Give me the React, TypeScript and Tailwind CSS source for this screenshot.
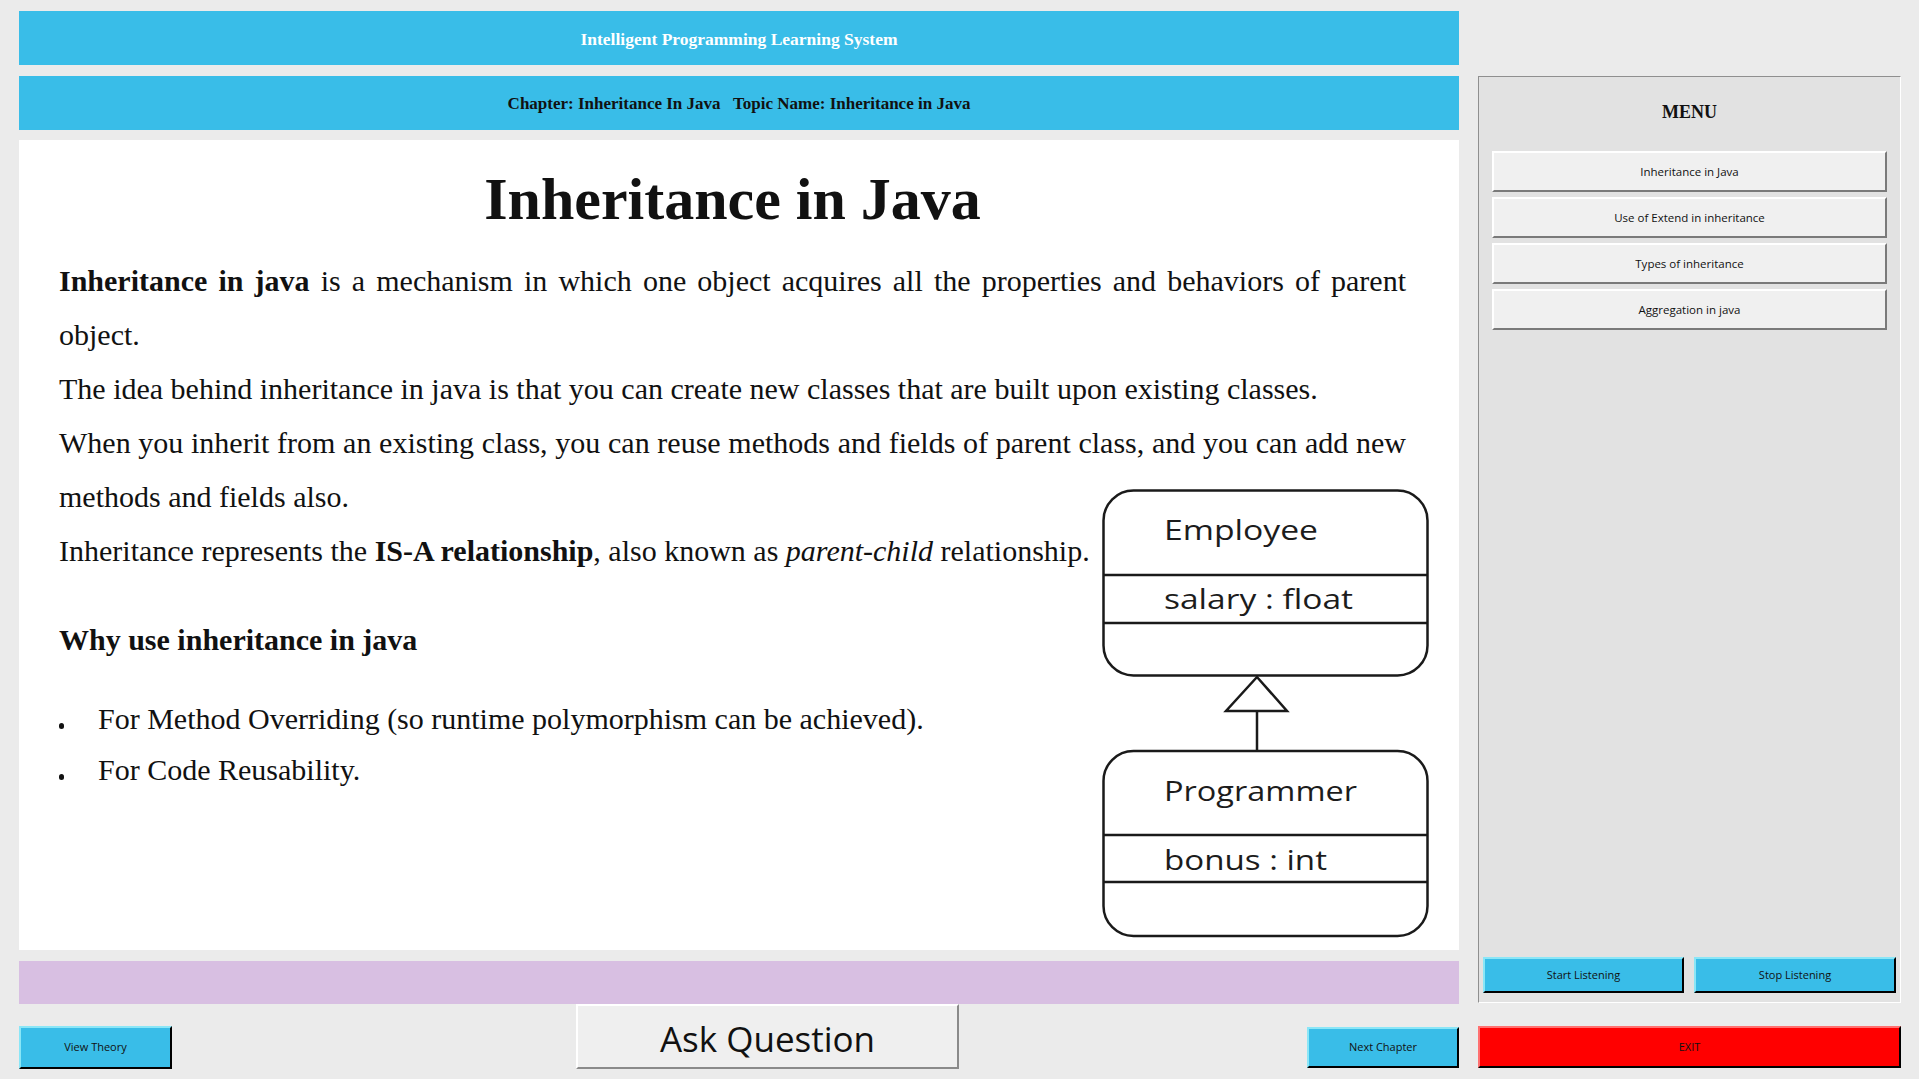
import React from "react";

const serif = { fontFamily: '"Liberation Serif", "Times New Roman", serif' };
const ui = { fontFamily: '"Open Sans", "Noto Sans", sans-serif' };

function Uml() {
  const txt = { fontFamily: '"Open Sans", Lato, sans-serif', fontSize: 27, fill: "#1c1c1c" } as React.CSSProperties;
  return (
    <svg width="328" height="450" viewBox="0 0 328 450" className="block">
      <g fill="none" stroke="#1a1a1a" strokeWidth="2.5">
        <rect x="1.5" y="1.5" width="324" height="185" rx="30" />
        <line x1="1.5" y1="86" x2="325.5" y2="86" />
        <line x1="1.5" y1="134" x2="325.5" y2="134" />
        <polygon points="155,188 124,222 185,222" />
        <line x1="155" y1="222" x2="155" y2="262" />
        <rect x="1.5" y="262" width="324" height="185" rx="30" />
        <line x1="1.5" y1="346" x2="325.5" y2="346" />
        <line x1="1.5" y1="393" x2="325.5" y2="393" />
      </g>
      <text x="62" y="51" style={txt} textLength="154" lengthAdjust="spacingAndGlyphs">Employee</text>
      <text x="62" y="120" style={txt} textLength="189" lengthAdjust="spacingAndGlyphs">salary : float</text>
      <text x="62" y="312" style={txt} textLength="193" lengthAdjust="spacingAndGlyphs">Programmer</text>
      <text x="62" y="381" style={txt} textLength="163" lengthAdjust="spacingAndGlyphs">bonus : int</text>
    </svg>
  );
}

function MenuBtn({ label }: { label: string }) {
  return (
    <button
      className="h-[41px] w-full bg-[#f0f0f0] border-t-2 border-l-2 border-t-white border-l-white border-b-2 border-r-2 border-b-[#7a7a7a] border-r-[#7a7a7a] text-[11.5px] text-[#111]"
      style={ui}
    >
      {label}
    </button>
  );
}

function Bullet({ children }: { children: React.ReactNode }) {
  return (
    <li className="flex">
      <span className="w-[39px] shrink-0">
        <span className="block mt-[30px] w-[5px] h-[6px] rounded-full bg-[#111]" />
      </span>
      <span>{children}</span>
    </li>
  );
}

export default function App() {
  return (
    <div className="w-[1919px] h-[1079px] bg-[#ebebeb] flex overflow-hidden">
      {/* Left column */}
      <div className="w-[1440px] ml-[19px] pt-[11px] flex flex-col">
        <div className="h-[54px] bg-[#39bde8] flex items-center justify-center pt-[2px]">
          <span className="text-white font-bold text-[17.5px]" style={serif}>
            Intelligent Programming Learning System
          </span>
        </div>
        <div className="h-[54px] mt-[11px] bg-[#39bde8] flex items-center justify-center pt-[2px]">
          <span className="text-[#111] font-bold text-[17px] whitespace-pre" style={serif}>
            {"Chapter: Inheritance In Java   Topic Name: Inheritance in Java"}
          </span>
        </div>
        <div className="relative h-[810px] mt-[10px] bg-white pl-[40px] pr-[53px] pt-[24px] text-[#111]" style={serif}>
          <h1 className="text-[60px] leading-[70px] font-bold text-center">Inheritance in Java</h1>
          <div className="text-[30px] leading-[54px] mt-[20px] text-justify">
            <p>
              <b>Inheritance in java</b> is a mechanism in which one object acquires all the properties and behaviors of parent object.
            </p>
            <p>The idea behind inheritance in java is that you can create new classes that are built upon existing classes.</p>
            <p>
              When you inherit from an existing class, you can reuse methods and fields of parent class, and you can add new methods and fields also.
            </p>
            <p>
              Inheritance represents the <b>IS-A relationship</b>, also known as <i>parent-child</i> relationship.
            </p>
            <p className="font-bold mt-[35px]">Why use inheritance in java</p>
            <ul className="mt-[26px] leading-[51px]">
              <Bullet>For Method Overriding (so runtime polymorphism can be achieved).</Bullet>
              <Bullet>For Code Reusability.</Bullet>
            </ul>
          </div>
          <div className="absolute left-[1083px] top-[349px]">
            <Uml />
          </div>
        </div>
        <div className="h-[43px] mt-[11px] bg-[#d8bfe2]" />
        <div className="h-[65px] flex items-end">
          <button
            className="w-[153px] h-[43px] bg-[#39bde8] border-t-2 border-l-2 border-t-[#8ae6f7] border-l-[#8ae6f7] border-b-2 border-r-2 border-b-black border-r-black text-[11px] text-[#111]"
            style={ui}
          >
            View Theory
          </button>
          <button
            className="ml-[404px] w-[383px] h-[65px] bg-[#efefef] border-t-2 border-l-2 border-t-white border-l-white border-b-2 border-r-2 border-b-[#8a8a8a] border-r-[#8a8a8a] text-[35px] text-[#111] leading-none pt-[4px]"
            style={ui}
          >
            Ask Question
          </button>
          <button
            className="ml-auto mb-[1px] w-[152px] h-[41px] bg-[#39bde8] border-t-2 border-l-2 border-t-[#8ae6f7] border-l-[#8ae6f7] border-b-2 border-r-2 border-b-black border-r-black text-[11px] text-[#111]"
            style={ui}
          >
            Next Chapter
          </button>
        </div>
      </div>

      {/* Right column */}
      <div className="w-[423px] ml-[19px] pt-[76px] flex flex-col">
        <div className="h-[927px] bg-[#e2e2e2] border-t border-l border-t-[#8f8f8f] border-l-[#8f8f8f] border-b border-r border-b-white border-r-white flex flex-col">
          <div className="h-[70px] mb-[4px] flex items-center justify-center">
            <span className="font-bold text-[18px] text-[#111]" style={serif}>MENU</span>
          </div>
          <div className="px-[13px] flex flex-col gap-[5px]">
            <MenuBtn label="Inheritance in Java" />
            <MenuBtn label="Use of Extend in inheritance" />
            <MenuBtn label="Types of inheritance" />
            <MenuBtn label="Aggregation in java" />
          </div>
          <div className="mt-auto mb-[9px] pl-[4px] pr-[4px] flex gap-[10px]">
            <button
              className="w-[201px] h-[36px] bg-[#39bde8] border-t-2 border-l-2 border-t-[#8ae6f7] border-l-[#8ae6f7] border-b-2 border-r-2 border-b-black border-r-black text-[11px] text-[#111]"
              style={ui}
            >
              Start Listening
            </button>
            <button
              className="w-[202px] h-[36px] bg-[#39bde8] border-t-2 border-l-2 border-t-[#8ae6f7] border-l-[#8ae6f7] border-b-2 border-r-2 border-b-black border-r-black text-[11px] text-[#111]"
              style={ui}
            >
              Stop Listening
            </button>
          </div>
        </div>
        <button
          className="mt-[23px] h-[42px] w-full bg-[#ff0000] border-t-2 border-l-2 border-t-[#ff7070] border-l-[#ff7070] border-b-2 border-r-2 border-b-black border-r-black text-[11px] text-[#111]"
          style={ui}
        >
          EXIT
        </button>
      </div>
    </div>
  );
}
